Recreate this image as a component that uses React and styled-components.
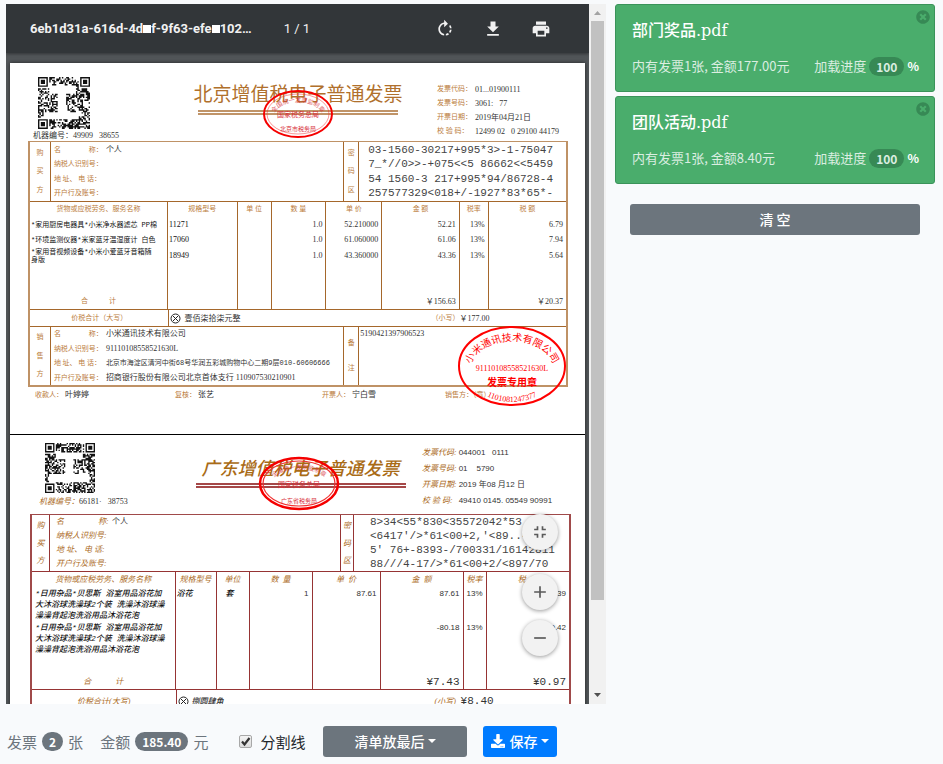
import React from "react";
import styled, { createGlobalStyle, ThemeProvider } from "styled-components";
import { FaDownload, FaTimesCircle } from "react-icons/fa";
import { MdFileDownload, MdPrint, MdRotateRight, MdAdd, MdRemove, MdFullscreenExit } from "react-icons/md";

const GlobalStyle = createGlobalStyle`
  *, *::before, *::after { box-sizing: border-box; }
  body { margin: 0; background: #f8fafc; color: #212529; font-family: "Noto Sans CJK SC", sans-serif; overflow: hidden; }
  button { font-family: inherit; cursor: pointer; }
`;

/* ---------- page shell ---------- */
const Shell = styled.div`
  display: grid;
  grid-template-columns: minmax(0, 1fr) 320px;
  column-gap: 9px;
  padding: 4px 8px 0 6px;
`;
const Main = styled.main`
  display: flex;
  flex-direction: column;
  min-width: 0;
`;
const Side = styled.aside`
  display: flex;
  flex-direction: column;
  gap: 4px;
`;

/* ---------- PDF viewer ---------- */
const Viewer = styled.section`
  display: flex;
  height: calc(100vh - 64px);
`;
const Stage = styled.div`
  position: relative;
  flex: 1;
  min-width: 0;
  display: flex;
  flex-direction: column;
  overflow: hidden;
  background: #525659;
`;
const Toolbar = styled.header`
  display: flex;
  align-items: center;
  flex: none;
  height: 49px;
  padding: 0 38px 0 24px;
  background: #323639;
  color: #f1f1f1;
  font: 13px/20px Roboto, sans-serif;
  box-shadow: 0 1px 3px rgba(0, 0, 0, 0.4);
`;
const FileName = styled.span`
  font-weight: 700;
  white-space: nowrap;
`;
const Masked = styled.span`
  display: inline-block;
  width: 8px;
  height: 8px;
  background: #fff;
`;
const PageCount = styled.span`
  margin-left: 32px;
  flex: 1;
  white-space: nowrap;
`;
const Tools = styled.div`
  display: flex;
  gap: 28px;
`;
const ToolButton = styled.button`
  display: flex;
  padding: 0;
  border: 0;
  background: none;
  color: #f1f1f1;
  font-size: 20px;
`;
const Pages = styled.div`
  flex: 1;
  min-height: 0;
  padding: 10px 4px 0;
  overflow: hidden;
`;
const Sheet = styled.div`
  background: #fff;
  box-shadow: 0 0 4px rgba(0, 0, 0, 0.6);
`;
const Fabs = styled.div`
  position: absolute;
  right: 31px;
  bottom: 48px;
  display: flex;
  flex-direction: column;
  gap: 10px;
`;
const Fab = styled.button`
  display: flex;
  align-items: center;
  justify-content: center;
  width: 36px;
  height: 36px;
  padding: 0;
  border: 0;
  border-radius: 50%;
  background: #f2f2f2;
  color: #5a5a5a;
  font-size: 20px;
  box-shadow: 0 1px 4px rgba(0, 0, 0, 0.4);
  margin-bottom: ${(p) => (p.$apart ? "14px" : "0")};
`;
const ScrollTrack = styled.div`
  flex: none;
  width: 17px;
  display: flex;
  flex-direction: column;
  align-items: center;
  background: #f1f1f1;
`;
const ScrollArrow = styled.svg`
  flex: none;
  width: 17px;
  height: 17px;
`;
const ScrollRun = styled.div`
  flex: 1;
  width: 13px;
`;
const ScrollThumb = styled.div`
  height: 87%;
  background: #c1c1c1;
`;

/* ---------- invoice ---------- */
const Invoice = styled.article`
  padding: 0 ${(p) => p.theme.padRight} 0 ${(p) => p.theme.padLeft};
  font: 8px/15px "Liberation Serif", "Noto Sans CJK SC", serif;
  color: #333;
  border-bottom: 1px solid #000;
`;
const Head = styled.header`
  display: grid;
  grid-template-columns: 1fr auto 1fr;
  height: ${(p) => p.theme.headHeight};
`;
const Identity = styled.div`
  display: flex;
  flex-direction: column;
  padding: ${(p) => p.theme.idPad};
  line-height: 14px;
  white-space: pre;
`;
const QrSvg = styled.svg`
  width: ${(p) => p.theme.qrSize};
  height: ${(p) => p.theme.qrSize};
  margin-left: ${(p) => p.theme.qrInset};
  margin-bottom: ${(p) => p.theme.qrGap};
`;
const TitleBlock = styled.div`
  position: relative;
  padding-top: 16px;
`;
const Title = styled.h1`
  margin: 0;
  font: ${(p) => p.theme.titleFont};
  color: ${(p) => p.theme.title};
  white-space: nowrap;
`;
const DoubleRule = styled.div`
  margin: ${(p) => p.theme.ruleMargin};
  height: 5px;
  border-top: 2px solid ${(p) => p.theme.rule};
  border-bottom: 2px solid ${(p) => p.theme.rule};
`;
const Meta = styled.dl`
  display: grid;
  grid-template-columns: max-content max-content;
  align-content: start;
  column-gap: ${(p) => p.theme.metaGap};
  grid-auto-rows: ${(p) => p.theme.metaRow};
  width: ${(p) => p.theme.metaWidth};
  margin: 0;
  padding-top: ${(p) => p.theme.metaPad};
  justify-self: end;
  align-items: center;
  white-space: pre;
`;
const Label = styled.span`
  font-size: ${(p) => p.theme.labelSize};
  font-style: ${(p) => p.theme.style};
  color: ${(p) => p.theme.label};
`;
const MetaLabel = styled.dt`
  font-size: ${(p) => p.theme.labelSize};
  font-style: ${(p) => p.theme.style};
  color: ${(p) => p.theme.label};
`;
const MetaValue = styled.dd`
  margin: 0;
  font-family: ${(p) => p.theme.digits};
`;
const Frame = styled.div`
  border: solid ${(p) => p.theme.outer};
  border-width: 1px 2px 2px;
`;
const Band = styled.div`
  display: grid;
  grid-template-columns: ${(p) => p.theme.bandCols};
  height: ${(p) => p.theme.bandHeight};
  border-top: ${(p) => (p.$ruled ? `1px solid ${p.theme.line}` : "0")};
`;
const Caption = styled.div`
  display: flex;
  flex-direction: column;
  align-items: center;
  justify-content: space-evenly;
  font-size: ${(p) => p.theme.labelSize};
  font-style: ${(p) => p.theme.style};
  line-height: 15px;
  color: ${(p) => p.theme.label};
  border-left: ${(p) => (p.$ruled ? `1px solid ${p.theme.line}` : "0")};
`;
const Fields = styled.div`
  display: flex;
  flex-direction: column;
  justify-content: space-evenly;
  border-left: 1px solid ${(p) => p.theme.line};
  padding-left: ${(p) => p.theme.fieldPad};
  line-height: 14px;
`;
const Field = styled.div`
  display: flex;
  gap: 2px;
  white-space: pre;
  font-size: ${(p) => (p.$dense ? "7px" : "8px")};
  font-family: ${(p) => (p.$dense ? p.theme.denseFont : "inherit")};
`;
const FieldLabel = styled(Label)`
  width: ${(p) => p.theme.fieldLabel};
  flex: none;
  font-family: "Liberation Serif", "Noto Sans CJK SC", serif;
`;
const Cipher = styled.div`
  display: flex;
  flex-direction: column;
  justify-content: space-evenly;
  border-left: 1px solid ${(p) => p.theme.line};
  padding-left: ${(p) => p.theme.cipherPad};
  font-family: "Liberation Mono", monospace;
  font-size: 11px;
  line-height: 14px;
  white-space: pre;
  color: #444;
`;
const Remark = styled.div`
  position: relative;
  border-left: 1px solid ${(p) => p.theme.line};
  padding-left: 1px;
  line-height: 13px;
`;
const Items = styled.table`
  width: 100%;
  height: ${(p) => p.theme.tableHeight};
  table-layout: fixed;
  border-collapse: collapse;
  border-top: 1px solid ${(p) => p.theme.line};
`;
const Cell = styled.td`
  padding: 0 3px 0 1px;
  border-left: 1px solid ${(p) => p.theme.line};
  text-align: ${(p) => p.$align || "left"};
  vertical-align: ${(p) => p.theme.cellAlign};
  white-space: pre;
  line-height: ${(p) => p.theme.itemLine};
  font-family: ${(p) => (p.$align ? p.theme.digits : "inherit")};
  font-size: 8px;
  font-style: ${(p) => (p.$align ? "normal" : p.theme.style)};
  font-weight: ${(p) => (p.$align ? 400 : p.theme.itemWeight)};
  color: ${(p) => (p.$align ? "#333" : "#111")};
  &:first-child {
    border-left: 0;
    padding-left: ${(p) => p.theme.namePad};
    font-size: ${(p) => p.theme.nameSize};
    font-family: ${(p) => p.theme.denseFont};
  }
`;
const HeadCell = styled.th`
  height: 16px;
  padding: 0;
  border-left: 1px solid ${(p) => p.theme.line};
  font-size: ${(p) => p.theme.labelSize};
  font-weight: 400;
  font-style: ${(p) => p.theme.style};
  color: ${(p) => p.theme.label};
  white-space: pre;
  &:first-child { border-left: 0; }
`;
const ItemRow = styled.tr`
  height: ${(p) => p.$height};
`;
const SumCell = styled(Cell)`
  vertical-align: middle;
  font-size: ${(p) => p.theme.sumSize};
  line-height: 12px;
  font-family: ${(p) => p.theme.sumFont};
`;
const SumLabel = styled(HeadCell)`
  height: 14px;
`;
const Total = styled.div`
  display: grid;
  grid-template-columns: ${(p) => p.theme.totalCols};
  align-items: center;
  min-height: ${(p) => p.theme.totalHeight};
  border-top: 1px solid ${(p) => p.theme.line};
`;
const TotalName = styled(Label)`
  text-align: center;
`;
const TotalWords = styled.span`
  align-self: stretch;
  display: flex;
  align-items: center;
  gap: 3px;
  padding-left: 1px;
  border-left: 1px solid ${(p) => p.theme.line};
  font-style: ${(p) => p.theme.style};
  font-weight: ${(p) => p.theme.itemWeight};
`;
const TotalSum = styled.span`
  font-family: ${(p) => p.theme.sumFont};
  font-size: ${(p) => p.theme.sumSize};
`;
const Cross = styled.svg`
  width: 11px;
  height: 11px;
`;
const Signers = styled.footer`
  display: grid;
  grid-template-columns: 140fr 147fr 123fr 123fr;
  padding-left: 7px;
  height: 47px;
`;
const SealSvg = styled.svg`
  position: absolute;
  overflow: visible;
  width: ${(p) => p.$w}px;
  height: ${(p) => p.$h}px;
  top: ${(p) => p.$top}px;
  right: ${(p) => p.$right};
  pointer-events: none;
  font-family: "Liberation Serif", "Noto Sans CJK SC", serif;
`;

const beijing = {
  padLeft: "18px", padRight: "17px", headHeight: "78px",
  idPad: "14px 0 0 5px", qrSize: "52px", qrInset: "5px", qrGap: "0",
  titleFont: '400 19px/28px "Noto Sans CJK SC", sans-serif', title: "#b0702c",
  rule: "#c09468", ruleMargin: "3px 5px 0",
  label: "#bb7c3c", labelSize: "7px", style: "normal",
  digits: '"Liberation Serif", "Noto Sans CJK SC", serif',
  denseFont: '"Liberation Mono", "Noto Sans CJK SC", monospace',
  metaGap: "3px", metaRow: "14px", metaWidth: "131px", metaPad: "19px",
  outer: "#bf9266", line: "#a5672b",
  bandCols: "20fr 295fr 15fr 209fr", bandHeight: "59px",
  fieldPad: "3px", fieldLabel: "50px", cipherPad: "9px",
  tableHeight: "108px", cellAlign: "middle", itemLine: "8px", itemWeight: 400, namePad: "1px", nameSize: "7px",
  sumSize: "8px", sumFont: '"Liberation Serif", "Noto Sans CJK SC", serif',
  totalCols: "139fr 264fr 28fr 107fr", totalHeight: "17px",
};
const guangdong = {
  ...beijing,
  padLeft: "20px", padRight: "14px", headHeight: "79px",
  idPad: "8px 0 0 9px", qrSize: "50px", qrInset: "6px", qrGap: "2px",
  titleFont: 'italic 500 18px/32px "Noto Sans CJK SC", sans-serif', title: "#a96b16",
  rule: "#a54848", ruleMargin: "0 -6px 0",
  label: "#ab6a1c", labelSize: "8px", style: "italic",
  digits: '"Liberation Sans", "Noto Sans CJK SC", sans-serif',
  metaGap: "0", metaRow: "16px", metaWidth: "149px", metaPad: "9px",
  outer: "#a04a4a", line: "#963434",
  bandCols: "17fr 291fr 13fr 216fr", bandHeight: "56px",
  fieldPad: "6px", fieldLabel: "54px", cipherPad: "16px",
  tableHeight: "118px", cellAlign: "top", itemLine: "11px", itemWeight: 500, namePad: "3px", nameSize: "8px",
  sumSize: "11px", sumFont: '"Liberation Mono", "Noto Sans CJK SC", monospace',
  totalCols: "143fr 258fr 26fr 108fr", totalHeight: "23px",
};

/* ---------- drawings ---------- */
function QrCode({ seed, gaps }) {
  const n = 37;
  const eyes = [[0, 0], [n - 7, 0], [0, n - 7]];
  let s = seed;
  let d = "";
  const eye = (x, y) => {
    for (const [ex, ey] of eyes) {
      const dx = x - ex, dy = y - ey;
      if (dx >= -1 && dx <= 7 && dy >= -1 && dy <= 7) {
        if (dx < 0 || dy < 0 || dx > 6 || dy > 6) return 0;
        return Math.max(Math.abs(dx - 3), Math.abs(dy - 3)) === 2 ? 0 : 1;
      }
    }
    return -1;
  };
  for (let y = 0; y < n; y++) {
    for (let x = 0; x < n; x++) {
      s = (s * 1103515245 + 12345) % 2147483648;
      const e = eye(x, y);
      const blank = gaps.some(([a, b, w, h]) => x >= a && x < a + w && y >= b && y < b + h);
      if (e === 1 || (e === -1 && !blank && (s >> 12) % 100 < 53)) d += `M${x} ${y}h1v1h-1z`;
    }
  }
  return (
    <QrSvg viewBox={`0 0 ${n} ${n}`} role="img" aria-label="二维码">
      <path d={d} fill="#111" />
    </QrSvg>
  );
}

function BureauSeal({ id, w, h, top, right, bureau, bold }) {
  const cx = w / 2, cy = h / 2;
  return (
    <SealSvg $w={w} $h={h} $top={top} $right={right} viewBox={`0 0 ${w} ${h}`} fill="#d8303a">
      <ellipse cx={cx} cy={cy} rx={cx - 1} ry={cy - 1} fill="none" stroke="#f50000" strokeWidth={bold ? 2.5 : 2} />
      <ellipse cx={cx} cy={cy} rx={cx - 4} ry={cy - 4} fill="none" stroke="#f03030" strokeWidth={bold ? 1.2 : 0.5} />
      <path id={id} d={`M11 ${cy + 2}A${cx - 11} ${cy - 10} 0 0 1 ${w - 11} ${cy + 2}`} fill="none" />
      <text fontSize="6" textAnchor="middle" opacity="0.8">
        <textPath href={`#${id}`} startOffset="50%">全国统一发票监制章</textPath>
      </text>
      <text x={cx} y={cy + 3} fontSize="7" textAnchor="middle">国家税务总局</text>
      <text x={cx} y={h - 7} fontSize="6" textAnchor="middle">{bureau}</text>
    </SealSvg>
  );
}

function CompanySeal() {
  return (
    <SealSvg $w={110} $h={82} $top={-2} $right="-1px" viewBox="0 0 110 82" fill="#f00">
      <ellipse cx="55" cy="41" rx="53" ry="39" fill="none" stroke="#f00" strokeWidth="2" />
      <path id="companyTop" d="M13 46A42 30 0 0 1 97 46" fill="none" />
      <path id="companyLow" d="M12 46A43 31 0 0 0 98 46" fill="none" />
      <text fontSize="10" textAnchor="middle"><textPath href="#companyTop" startOffset="50%">小米通讯技术有限公司</textPath></text>
      <text x="55" y="46" fontSize="8" textAnchor="middle">91110108558521630L</text>
      <text x="55" y="61" fontSize="10" fontWeight="700" textAnchor="middle">发票专用章</text>
      <text fontSize="8" textAnchor="middle"><textPath href="#companyLow" startOffset="50%">1101081247377</textPath></text>
    </SealSvg>
  );
}

function CircleCross() {
  return (
    <Cross viewBox="0 0 11 11" fill="none" stroke="#222">
      <circle cx="5.5" cy="5.5" r="4.5" />
      <path d="M3 3l5 5M8 3l-5 5" />
    </Cross>
  );
}

/* ---------- invoice parts ---------- */
function MetaList({ rows }) {
  return (
    <Meta>
      {rows.map(([k, v]) => (
        <React.Fragment key={k}>
          <MetaLabel>{k}</MetaLabel>
          <MetaValue>{v}</MetaValue>
        </React.Fragment>
      ))}
    </Meta>
  );
}
function FieldList({ rows }) {
  return (
    <Fields>
      {rows.map(([k, v, dense]) => (
        <Field key={k} $dense={dense}>
          <FieldLabel>{k}</FieldLabel>
          <span>{v}</span>
        </Field>
      ))}
    </Fields>
  );
}
function Vertical({ text, ruled }) {
  return (
    <Caption $ruled={ruled}>
      {[...text].map((c) => <span key={c}>{c}</span>)}
    </Caption>
  );
}
function CipherBlock({ lines }) {
  return <Cipher>{lines.map((l) => <span key={l}>{l}</span>)}</Cipher>;
}
function ItemTable({ widths, heads, rows, rowHeights, sum, tax }) {
  const total = widths.reduce((a, b) => a + b, 0);
  return (
    <Items>
      <colgroup>{widths.map((w, i) => <col key={i} width={`${(w / total) * 100}%`} />)}</colgroup>
      <thead><tr>{heads.map((h) => <HeadCell key={h}>{h}</HeadCell>)}</tr></thead>
      <tbody>
        {rows.map((r, i) => (
          <ItemRow key={i} $height={rowHeights[i]}>
            {r.map((c, j) => (
              <Cell key={j} $align={j > 2 ? "right" : undefined}>{c}</Cell>
            ))}
          </ItemRow>
        ))}
        <tr>{heads.map((h) => <Cell key={h} />)}</tr>
        <tr>
          <SumLabel as="td" align="center">合　　　计</SumLabel>
          <Cell /><Cell /><Cell /><Cell />
          <SumCell $align="right">{sum}</SumCell>
          <Cell />
          <SumCell $align="right">{tax}</SumCell>
        </tr>
      </tbody>
    </Items>
  );
}

const buyerRows = [["名　　　　称：", "个人"], ["纳税人识别号：", ""], ["地 址、 电 话：", ""], ["开户行及账号：", ""]];
const sellerRows = [
  ["名　　　　称：", "小米通讯技术有限公司"],
  ["纳税人识别号：", "91110108558521630L"],
  ["地 址、 电 话：", "北京市海淀区清河中街68号华润五彩城购物中心二期9层010-60606666", true],
  ["开户行及账号：", "招商银行股份有限公司北京首体支行 110907530210901"],
];

function BeijingInvoice() {
  return (
    <ThemeProvider theme={beijing}>
      <Invoice>
        <Head>
          <Identity>
            <QrCode seed={71} gaps={[[8, 6, 19, 6], [14, 12, 6, 14], [4, 25, 25, 5]]} />
            <span>机器编号：49909   38655</span>
          </Identity>
          <TitleBlock>
            <Title>北京增值税电子普通发票</Title>
            <DoubleRule />
            <BureauSeal id="sealBj" w={70} h={48} top={27} right="70px" bureau="北京市税务局" />
          </TitleBlock>
          <MetaList rows={[["发票代码：", "01...01900111"], ["发票号码：", "3061:   77"], ["开票日期：", "2019年04月21日"], ["校 验 码：", "12499 02   0 29100 44179"]]} />
        </Head>
        <Frame>
          <Band>
            <Vertical text="购买方" />
            <FieldList rows={buyerRows} />
            <Vertical text="密码区" ruled />
            <CipherBlock lines={["03-1560-30217+995*3>-1-75047", "7_*//0>>-+075<<5 86662<<5459", "54 1560-3 217+995*94/86728-4", "257577329<018+/-1927*83*65*-"]} />
          </Band>
          <ItemTable
            widths={[138, 70, 34, 55, 56, 78, 29, 78]}
            heads={["货物或应税劳务、服务名称", "规格型号", "单 位", "数 量", "单 价", "金 额", "税率", "税 额"]}
            rows={[
              ["*家用厨房电器具*小米净水器滤芯 PP棉", "11271", "", "1.0", "52.210000", "52.21", "13%", "6.79"],
              ["*环境监测仪器*米家蓝牙温湿度计 白色", "17060", "", "1.0", "61.060000", "61.06", "13%", "7.94"],
              ["*家用音视频设备*小米小爱蓝牙音箱随\n身版", "18949", "", "1.0", "43.360000", "43.36", "13%", "5.64"],
            ]}
            rowHeights={["15px", "15px", "17px"]}
            sum="￥156.63"
            tax="￥20.37"
          />
          <Total>
            <TotalName>价税合计（大写）</TotalName>
            <TotalWords><CircleCross />壹佰柒拾柒元整</TotalWords>
            <Label>（小写）</Label>
            <TotalSum>￥177.00</TotalSum>
          </Total>
          <Band $ruled>
            <Vertical text="销售方" />
            <FieldList rows={sellerRows} />
            <Vertical text="备注" ruled />
            <Remark>5190421397906523<CompanySeal /></Remark>
          </Band>
        </Frame>
        <Signers>
          <span><Label>收款人：</Label> 叶婷婷</span>
          <span><Label>复核：</Label> 张艺</span>
          <span><Label>开票人：</Label> 宁白雪</span>
          <span><Label>销售方：（章）</Label></span>
        </Signers>
      </Invoice>
    </ThemeProvider>
  );
}

const bathNames = "*日用杂品*贝思斯 浴室用品浴花加\n大沐浴球洗澡球2个装 洗澡沐浴球澡\n澡澡背起泡洗浴用品沐浴花泡";

function GuangdongInvoice() {
  return (
    <ThemeProvider theme={guangdong}>
      <Invoice>
        <Head>
          <Identity>
            <QrCode seed={1234} gaps={[[8, 7, 20, 5], [15, 12, 6, 12], [3, 23, 30, 6]]} />
            <span><Label>机器编号：</Label>66181·   38753</span>
          </Identity>
          <TitleBlock>
            <Title>广东增值税电子普通发票</Title>
            <DoubleRule />
            <BureauSeal id="sealGd" w={80} h={53} top={22} right="61px" bureau="广东省税务局" bold />
          </TitleBlock>
          <MetaList rows={[["发票代码:", "044001   0111"], ["发票号码:", "01    5790"], ["开票日期: ", "2019 年08 月12 日"], ["校 验 码:", "49410 0145. 05549 90991"]]} />
        </Head>
        <Frame>
          <Band>
            <Vertical text="购买方" />
            <FieldList rows={[["名　　　　 称:", "个人"], ["纳税人识别号:", ""], ["地 址、 电 话:", ""], ["开户行及账号:", ""]]} />
            <Vertical text="密码区" ruled />
            <CipherBlock lines={["8>34<55*830<35572042*53", "<6417'/>*61<00+2,'<89..^44", "5' 76+-8393-/700331/16142811", "88///4-17/>*61<00+2/<897/70"]} />
          </Band>
          <ItemTable
            widths={[143, 41, 33, 63, 68, 83, 23, 83]}
            heads={["货物或应税劳务、服务名称", "规格型号", "单位", "数  量", "单  价", "金  额", "税率", "税  额"]}
            rows={[
              [bathNames, "浴花", "　套", "1", "87.61", "87.61", "13%", "0.39"],
              [bathNames, "", "", "", "", "-80.18", "13%", "-0.42"],
            ]}
            rowHeights={["34px", "34px"]}
            sum="¥7.43"
            tax="¥0.97"
          />
          <Total>
            <TotalName>价税合计(大写)</TotalName>
            <TotalWords><CircleCross />捌圆肆角</TotalWords>
            <Label>(小写)</Label>
            <TotalSum>¥8.40</TotalSum>
          </Total>
        </Frame>
      </Invoice>
    </ThemeProvider>
  );
}

/* ---------- bottom bar ---------- */
const Footer = styled.footer`
  display: flex;
  align-items: flex-start;
  height: 60px;
  padding: 22px 0 0 1px;
`;
const Stat = styled.span`
  display: flex;
  align-items: center;
  gap: 5px;
  height: 31px;
  margin-right: 17px;
  font-size: 15px;
  color: #6c757d;
  white-space: nowrap;
`;
const Badge = styled.span`
  padding: 0 7px;
  border-radius: 10px;
  background: ${(p) => (p.$green ? "#378955" : "#6c757d")};
  color: ${(p) => (p.$green ? "#dbeee1" : "#fff")};
  font-size: 12px;
  font-weight: 700;
  line-height: 19px;
`;
const CheckLabel = styled.label`
  position: relative;
  display: flex;
  align-items: center;
  gap: 8px;
  height: 31px;
  margin: 0 18px 0 14px;
  font-size: 15px;
  white-space: nowrap;
`;
const CheckBox = styled.input`
  appearance: none;
  width: 13px;
  height: 13px;
  margin: 0;
  border: 1px solid #a8a8a8;
  border-radius: 2px;
  background: linear-gradient(#f4f4f4, #dcdcdc);
  &:not(:checked) + svg { display: none; }
`;
const CheckMark = styled.svg`
  position: absolute;
  left: 1px;
  width: 11px;
  height: 11px;
  pointer-events: none;
`;
const Button = styled.button`
  display: flex;
  align-items: center;
  justify-content: center;
  gap: 4px;
  height: 31px;
  padding: 0 8px 2px;
  border: 0;
  border-radius: 3px;
  background: ${(p) => (p.$primary ? "#007bff" : "#6c757d")};
  color: #fff;
  font-size: 14px;
  font-weight: 500;
  white-space: nowrap;
  min-width: ${(p) => (p.$wide ? "144px" : "0")};
  margin: ${(p) => (p.$block ? "16px 15px 0" : "0 16px 0 0")};
`;
const Caret = styled.i`
  border: 4px solid transparent;
  border-top-color: #fff;
  border-bottom: 0;
`;

/* ---------- file cards ---------- */
const Card = styled.article`
  position: relative;
  height: 88px;
  padding: 14px 15px 0 16px;
  border: 1px solid #3a935a;
  border-radius: 3px;
  background: #4aad6c;
  color: #fff;
`;
const CardTitle = styled.h2`
  margin: 0;
  font: 500 16px/24px "DejaVu Serif", "Noto Sans CJK SC", serif;
`;
const CardInfo = styled.div`
  display: flex;
  align-items: center;
  justify-content: space-between;
  margin-top: 13px;
  font-size: 13px;
  line-height: 20px;
  color: #dbeee1;
`;
const Progress = styled.span`
  display: flex;
  align-items: center;
  gap: 3px;
`;
const Percent = styled.b`
  color: #fff;
  font-size: 12px;
`;
const Close = styled.button`
  position: absolute;
  top: 5px;
  right: 4px;
  display: flex;
  padding: 0;
  border: 0;
  background: none;
  color: #378955;
  font-size: 14px;
`;

function FileCard({ name, info }) {
  return (
    <Card>
      <CardTitle>{name}</CardTitle>
      <CardInfo>
        <span>{info}</span>
        <Progress>加载进度<Badge $green>100</Badge><Percent>%</Percent></Progress>
      </CardInfo>
      <Close aria-label="移除"><FaTimesCircle /></Close>
    </Card>
  );
}

export default function App() {
  return (
    <>
      <GlobalStyle />
      <Shell>
        <Main>
          <Viewer>
            <Stage>
              <Toolbar>
                <FileName>6eb1d31a-616d-4d<Masked />f-9f63-efe<Masked />102…</FileName>
                <PageCount>1 / 1</PageCount>
                <Tools>
                  <ToolButton aria-label="旋转"><MdRotateRight /></ToolButton>
                  <ToolButton aria-label="下载"><MdFileDownload /></ToolButton>
                  <ToolButton aria-label="打印"><MdPrint /></ToolButton>
                </Tools>
              </Toolbar>
              <Pages>
                <Sheet>
                  <BeijingInvoice />
                  <GuangdongInvoice />
                </Sheet>
              </Pages>
              <Fabs>
                <Fab aria-label="适合页面" $apart><MdFullscreenExit /></Fab>
                <Fab aria-label="放大"><MdAdd /></Fab>
                <Fab aria-label="缩小"><MdRemove /></Fab>
              </Fabs>
            </Stage>
            <ScrollTrack>
              <ScrollArrow viewBox="0 0 17 17"><path d="M5 11l3.500-4 3.500 4z" fill="#a3a3a3" /></ScrollArrow>
              <ScrollRun><ScrollThumb /></ScrollRun>
              <ScrollArrow viewBox="0 0 17 17"><path d="M5 6l3.500 4 3.500-4z" fill="#505050" /></ScrollArrow>
            </ScrollTrack>
          </Viewer>
          <Footer>
            <Stat>发票<Badge>2</Badge>张</Stat>
            <Stat>金额<Badge>185.40</Badge>元</Stat>
            <CheckLabel>
              <CheckBox type="checkbox" defaultChecked />
              <CheckMark viewBox="0 0 11 11"><path d="M2 5.500l2.500 3L9.500 2" fill="none" stroke="#333" strokeWidth="2.200" /></CheckMark>
              分割线
            </CheckLabel>
            <Button $wide>清单放最后<Caret /></Button>
            <Button $primary><FaDownload />保存<Caret /></Button>
          </Footer>
        </Main>
        <Side>
          <FileCard name="部门奖品.pdf" info="内有发票1张, 金额177.00元" />
          <FileCard name="团队活动.pdf" info="内有发票1张, 金额8.40元" />
          <Button $block>清 空</Button>
        </Side>
      </Shell>
    </>
  );
}
